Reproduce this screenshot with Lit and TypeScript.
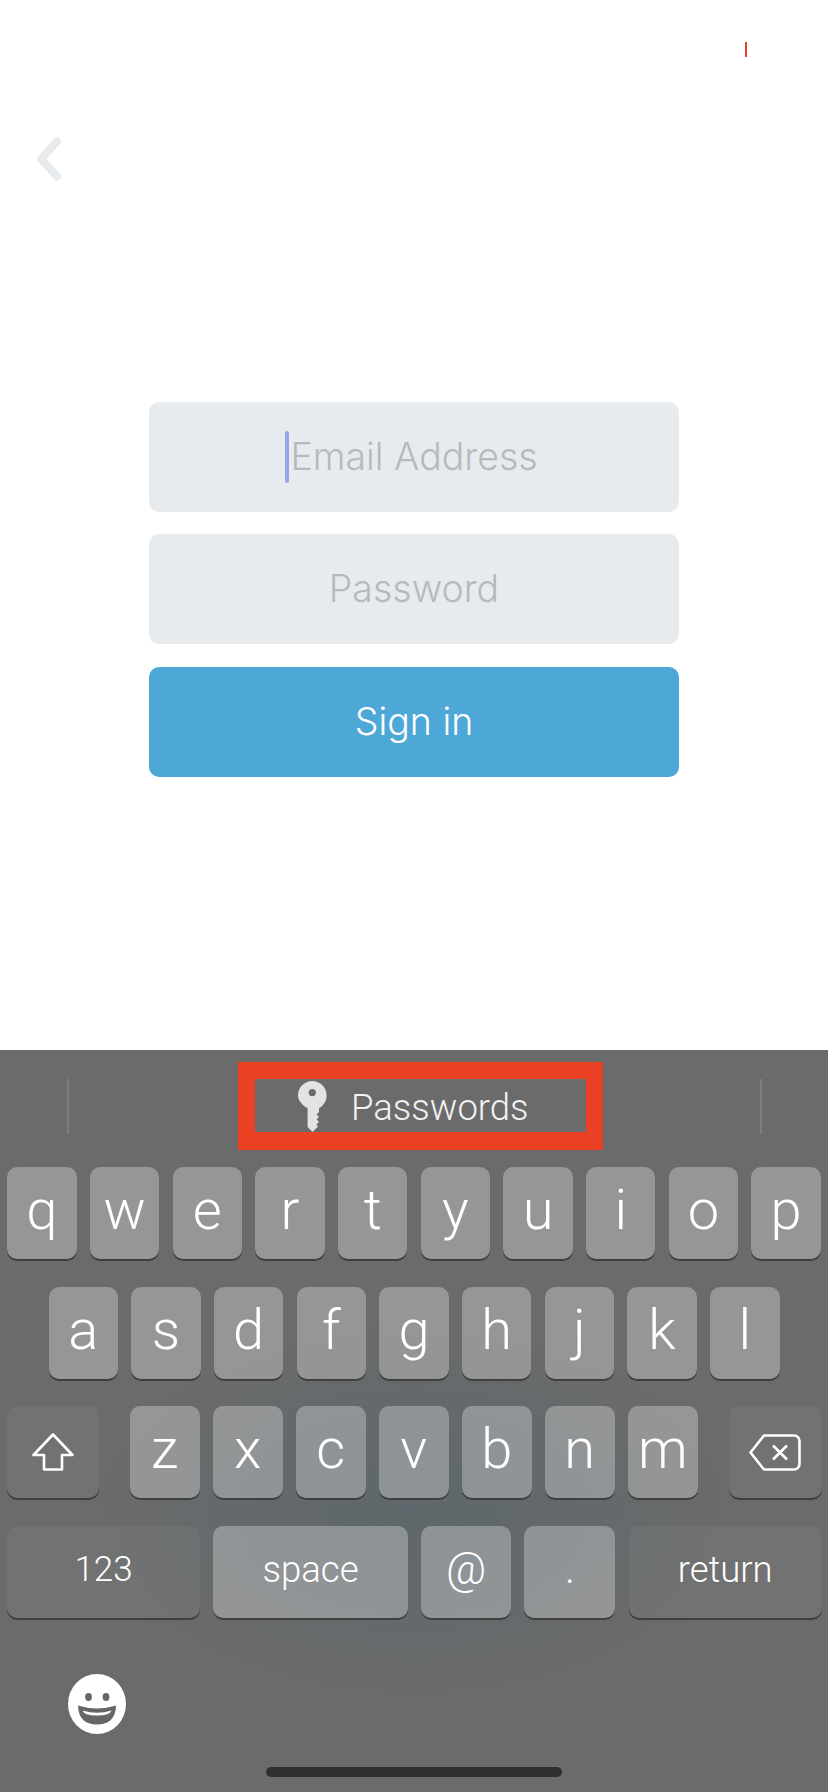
import { LitElement, css, html } from "lit";
import { customElement } from "lit/decorators.js";

const ROW_ONE = ["q", "w", "e", "r", "t", "y", "u", "i", "o", "p"];
const ROW_TWO = ["a", "s", "d", "f", "g", "h", "j", "k", "l"];
const ROW_THREE = ["z", "x", "c", "v", "b", "n", "m"];

@customElement("app-root")
export class AppRoot extends LitElement {
  static styles = css`
    :host {
      display: flex;
      flex-direction: column;
      width: 828px;
      height: 1792px;
      background: #fff;
      overflow: hidden;
    }
    .screen {
      flex: 1;
      display: flex;
      flex-direction: column;
      font-family: Inter, sans-serif;
      font-weight: 300;
    }
    .status {
      display: flex;
      justify-content: flex-end;
      padding: 42px 81px 0 0;
    }
    .tick {
      width: 2px;
      height: 15px;
      background: #ea4125;
    }
    .back {
      display: block;
      width: 26px;
      height: 44px;
      margin: 80px 0 0 36px;
    }
    .form {
      display: flex;
      flex-direction: column;
      gap: 22px;
      width: 530px;
      margin: 221px 0 0 149px;
    }
    .field {
      display: flex;
      align-items: center;
      justify-content: center;
      height: 110px;
      padding-bottom: 2px;
      box-sizing: border-box;
      border-radius: 10px;
      background: #e8ebee;
      color: #b5babe;
      font-size: 37.5px;
    }
    .field.submit {
      margin-top: 1px;
      background: #4ea8d7;
      color: #fff;
    }
    .label {
      position: relative;
    }
    .caret {
      position: absolute;
      left: -5px;
      top: -3px;
      width: 4px;
      height: 52px;
      border-radius: 2px;
      background: #95a5e8;
    }
    .keyboard {
      height: 742px;
      display: flex;
      flex-direction: column;
      background: radial-gradient(ellipse 340px 200px at 414px 460px, #5e676b 0%, #6b6b6b 100%), #6b6b6b;
      font-family: Roboto, sans-serif;
      font-weight: 300;
      color: #fff;
    }
    .suggestions {
      display: flex;
      height: 117px;
      box-sizing: border-box;
      padding: 12px 0 0 67px;
    }
    .divider {
      width: 2px;
      height: 55px;
      margin-top: 17px;
      background: #7d7d7d;
    }
    .password-box {
      box-sizing: border-box;
      display: flex;
      align-items: flex-start;
      gap: 24px;
      width: 365px;
      height: 88px;
      margin: 0 157px 0 169px;
      padding: 2px 0 0 43px;
      border: solid #ea4125;
      border-width: 17px 17px 18px;
      color: #f2f2f2;
      font-size: 36.5px;
    }
    .password-box span {
      line-height: 48px;
      margin-top: 3px;
    }
    .rows {
      display: flex;
      flex-direction: column;
      gap: 25.5px;
    }
    .row {
      display: flex;
      justify-content: center;
      gap: 13.2px;
      height: 94px;
    }
    .row.split {
      justify-content: flex-start;
      gap: 13.5px;
      padding-left: 7px;
    }
    .row.bottom {
      gap: 13.3px;
    }
    .key {
      box-sizing: border-box;
      display: flex;
      align-items: center;
      justify-content: center;
      width: 69.5px;
      height: 92px;
      padding-bottom: 5px;
      border-radius: 10px;
      background: rgba(255, 255, 255, 0.29);
      box-shadow: 0 2px 0 #3f3f3f;
      font-size: 36.5px;
    }
    .key.letter {
      font-size: 56px;
      padding-bottom: 6px;
    }
    .key.dark {
      background: rgba(255, 255, 255, 0.05);
    }
    .key.shift {
      width: 92px;
      margin-right: 17.5px;
      padding-bottom: 0;
    }
    .key.delete {
      width: 93px;
      margin-left: 17.5px;
      padding-bottom: 0;
    }
    .key.numbers {
      width: 193px;
      font-size: 35px;
    }
    .key.space {
      width: 194.5px;
    }
    .key.at {
      width: 90px;
      font-size: 44px;
    }
    .key.dot {
      width: 91px;
      font-size: 44px;
      padding-bottom: 8px;
    }
    .key.return {
      width: 193px;
    }
    .emoji {
      display: block;
      width: 58px;
      height: 60px;
      margin: 54px 0 0 68px;
    }
    .home {
      width: 296px;
      height: 10px;
      margin: 33px auto 0;
      border-radius: 5px;
      background: #2f2f2f;
    }
  `;

  private letterKeys(letters: string[]) {
    return letters.map((l) => html`<div class="key letter">${l}</div>`);
  }

  render() {
    return html`
      <div class="screen">
        <div class="status"><div class="tick"></div></div>
        <svg class="back" viewBox="0 0 26 44">
          <path
            d="M21 4.5 5 22l16 17.5"
            fill="none"
            stroke="#e8ebee"
            stroke-width="8"
            stroke-linecap="round"
            stroke-linejoin="round"
          />
        </svg>
        <div class="form">
          <div class="field">
            <span class="label"><i class="caret"></i>Email Address</span>
          </div>
          <div class="field">Password</div>
          <div class="field submit">Sign in</div>
        </div>
      </div>
      <div class="keyboard">
        <div class="suggestions">
          <div class="divider"></div>
          <div class="password-box">
            <svg width="29" height="51" viewBox="0 0 29 51">
              <path
                fill="#e3e3e3"
                fill-rule="evenodd"
                d="M14.3 0C22.2 0 28.6 6.5 28.6 14.4c0 5.5-3.1 10.3-7.6 12.7V31l-2.4 2.3L21 36l-2.4 2.3L21 41l-2.6 2.5 1.6 2L14.5 51 9.6 46V27.1C5 24.7 0 19.9 0 14.4 0 6.5 6.4 0 14.3 0Zm0 8a3.6 3.6 0 1 0 0 7.2 3.6 3.6 0 0 0 0-7.2Z"
              />
            </svg>
            <span>Passwords</span>
          </div>
          <div class="divider"></div>
        </div>
        <div class="rows">
          <div class="row">${this.letterKeys(ROW_ONE)}</div>
          <div class="row">${this.letterKeys(ROW_TWO)}</div>
          <div class="row split">
            <div class="key dark shift">
              <svg width="42" height="38" viewBox="0 0 42 38">
                <path
                  d="M21 1.5 1.5 22H12v14.5h18V22h10.5Z"
                  fill="none"
                  stroke="#fff"
                  stroke-width="2.6"
                  stroke-linejoin="round"
                />
              </svg>
            </div>
            ${this.letterKeys(ROW_THREE)}
            <div class="key dark delete">
              <svg width="52" height="37" viewBox="0 0 52 37">
                <path
                  d="M15 1.5h30a5.5 5.5 0 0 1 5.5 5.5v23a5.5 5.5 0 0 1-5.5 5.5H15L1.5 18.5Z"
                  fill="none"
                  stroke="#fff"
                  stroke-width="2.6"
                  stroke-linejoin="round"
                />
                <path d="M24 11.5 38 25.5M38 11.5 24 25.5" stroke="#fff" stroke-width="2.6" />
              </svg>
            </div>
          </div>
          <div class="row split bottom">
            <div class="key dark numbers">123</div>
            <div class="key space">space</div>
            <div class="key at">@</div>
            <div class="key dot">.</div>
            <div class="key dark return">return</div>
          </div>
        </div>
        <svg class="emoji" viewBox="0 0 58 60">
          <ellipse cx="29" cy="30" rx="29" ry="30" fill="#fff" />
          <ellipse cx="20.5" cy="23" rx="3.4" ry="4" fill="#666" />
          <ellipse cx="38" cy="23" rx="3.4" ry="4" fill="#666" />
          <path d="M10 31.5Q29 37.5 48 31.5 47.5 50.5 29 50.5 10.5 50.5 10 31.5Z" fill="#666" />
          <path d="M14.5 36.5Q29 41 43.5 36.5 42 41.5 29 41.5 16 41.5 14.5 36.5Z" fill="#fff" />
        </svg>
        <div class="home"></div>
      </div>
    `;
  }
}
